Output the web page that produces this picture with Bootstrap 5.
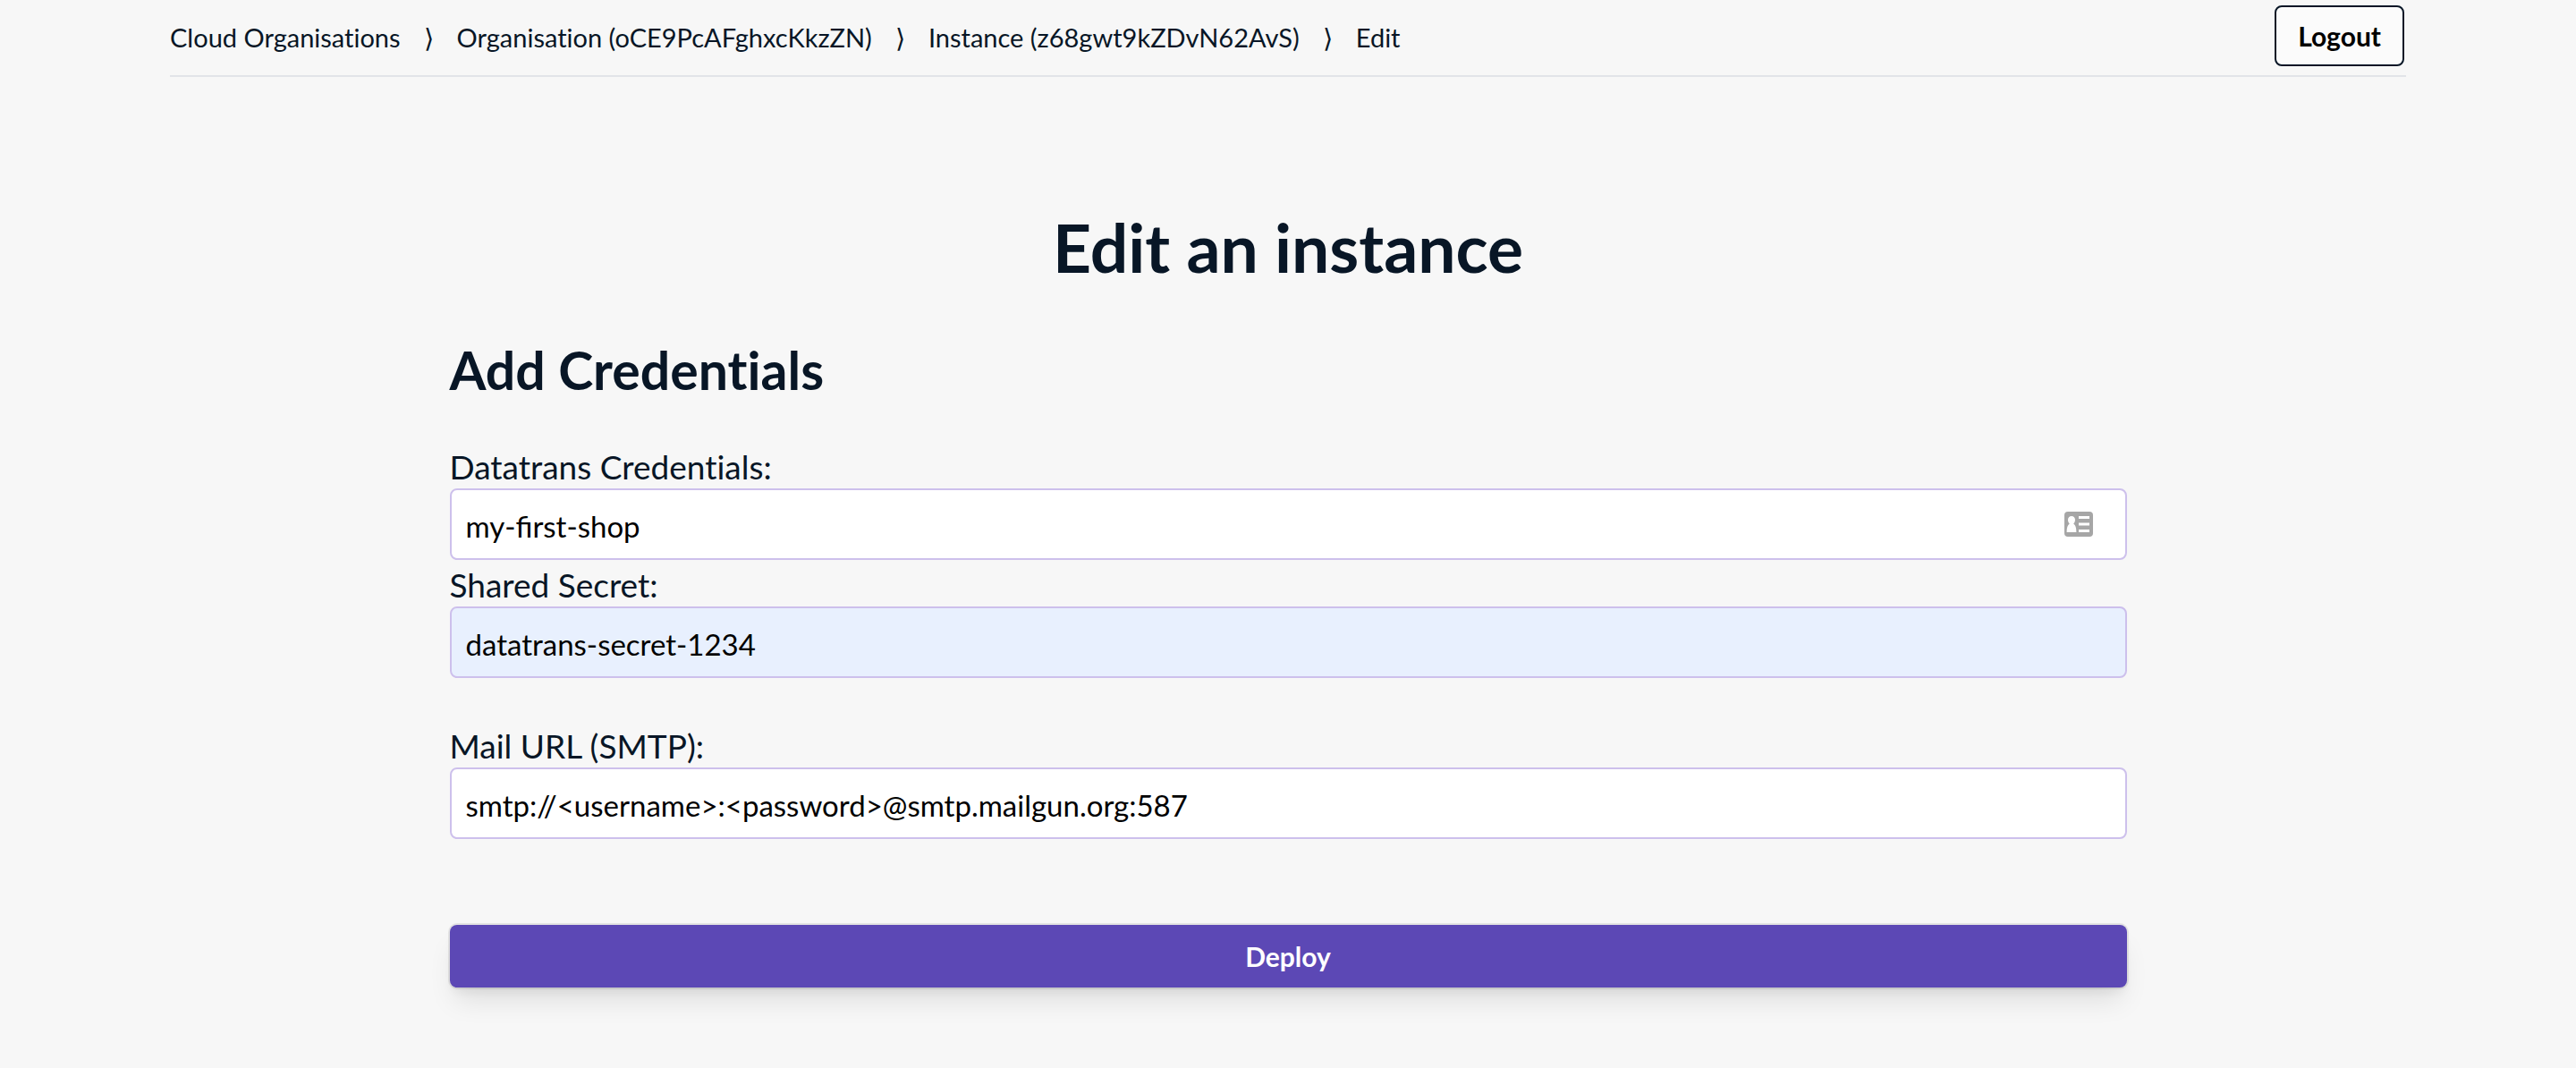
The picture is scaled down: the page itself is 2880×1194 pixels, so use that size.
<!DOCTYPE html>
<html lang="en">
<head>
<meta charset="utf-8">
<meta name="viewport" content="width=device-width, initial-scale=1">
<title>Edit an instance</title>
<link href="https://cdn.jsdelivr.net/npm/bootstrap@5.3.0/dist/css/bootstrap.min.css" rel="stylesheet">
<style>
  body { background: #f7f7f7; color: #081626; font-family: Avenir, Lato, sans-serif; font-size: 29px; font-variant-ligatures: none; }
  .page-wrap { max-width: 2500px; }
  .top-bar { border-bottom: 2px solid #e2e4e8; padding: 6px 0 10px; }
  .crumbs { --bs-breadcrumb-divider: "\27E9"; --bs-breadcrumb-item-padding-x: 26px; --bs-breadcrumb-divider-color: #081626; --bs-breadcrumb-font-size: 29px; line-height: 40px; padding-top: 4px; }
  .crumbs a, .crumbs .active { color: #081626; text-decoration: none; }
  .btn-logout { --bs-btn-color: #000; --bs-btn-bg: #fbfbfb; --bs-btn-border-color: #081626; --bs-btn-border-width: 2px; --bs-btn-border-radius: 8px; --bs-btn-hover-bg: #eee; --bs-btn-font-size: 30px; --bs-btn-font-weight: 700; --bs-btn-padding-x: 24px; --bs-btn-padding-y: 12px; --bs-btn-line-height: 40px; margin-right: 2px; }
  .page-title { font-size: 75px; line-height: 80px; font-weight: 700; margin: 150px 0 66px; }
  .section-title { font-size: 59px; line-height: 64px; font-weight: 700; margin-bottom: 52px; }
  .field-label { display: block; font-size: 37px; line-height: 48px; }
  .field-box { height: 80px; border: 2px solid #cdc0ec; border-radius: 8px; padding: 8px 16px 4px; font-size: 33px; color: #000; }
  .field-box.is-filled { background: #e8f0fe; }
  .contact-icon { position: absolute; right: 38px; top: 26px; width: 32px; height: 28px; }
  .field-stack { display: grid; gap: 4px; margin-bottom: 52px; }
  .btn-deploy { --bs-btn-color: #fff; --bs-btn-bg: #5c48b5; --bs-btn-hover-color: #fff; --bs-btn-hover-bg: #4f3da1; --bs-btn-border-width: 0; --bs-btn-border-radius: 8px; --bs-btn-font-size: 30px; --bs-btn-font-weight: 700; --bs-btn-line-height: 40px; --bs-btn-padding-y: 15px; margin: 44px 0 88px; box-shadow: 0 0 0 2px rgba(0,0,0,.08), 0 20px 30px -6px rgba(0,0,0,.1), 0 8px 12px -4px rgba(0,0,0,.06); }
</style>
<script src="https://cdn.jsdelivr.net/npm/bootstrap@5.3.0/dist/js/bootstrap.bundle.min.js"></script>
</head>
<body>
<div class="container-fluid page-wrap px-0">
  <header class="top-bar d-flex justify-content-between align-items-center">
    <nav aria-label="Breadcrumb">
      <ol class="breadcrumb crumbs mb-0">
        <li class="breadcrumb-item"><a href="#">Cloud Organisations</a></li>
        <li class="breadcrumb-item"><a href="#">Organisation (oCE9PcAFghxcKkzZN)</a></li>
        <li class="breadcrumb-item"><a href="#">Instance (z68gwt9kZDvN62AvS)</a></li>
        <li class="breadcrumb-item active" aria-current="page">Edit</li>
      </ol>
    </nav>
    <button type="button" class="btn btn-logout">Logout</button>
  </header>
  <main>
    <h1 class="page-title text-center">Edit an instance</h1>
    <div class="row justify-content-center gx-0">
      <form class="col-9">
        <h2 class="section-title">Add Credentials</h2>
        <div class="field-stack">
          <div>
            <label class="field-label" for="credentials">Datatrans Credentials:</label>
            <div class="position-relative">
              <input class="form-control field-box" type="text" id="credentials" value="my-first-shop">
              <svg class="contact-icon" viewBox="0 0 32 28" aria-hidden="true">
                <rect width="32" height="28" rx="4" fill="#a6a6a6"/>
                <path fill="#fff" d="M8 5c-2.500 0-4 1.800-4 4.200 0 2 .8 3.300 1.800 4.200C3.500 15 2.600 18 2.600 23h10.800c0-5-.9-8-3.200-9.600 1-.9 1.800-2.200 1.800-4.200C12 6.800 10.500 5 8 5zM16 5h12v3H16zM16 12.500h12v3H16zM16 20h12v3H16z"/>
              </svg>
            </div>
          </div>
          <div>
            <label class="field-label" for="secret">Shared Secret:</label>
            <input class="form-control field-box is-filled" type="text" id="secret" value="datatrans-secret-1234">
          </div>
        </div>
        <div class="field-stack">
          <div>
            <label class="field-label" for="mail">Mail URL (SMTP):</label>
            <input class="form-control field-box" type="text" id="mail" value="smtp://&lt;username&gt;:&lt;password&gt;@smtp.mailgun.org:587">
          </div>
        </div>
        <button type="submit" class="btn btn-deploy w-100">Deploy</button>
      </form>
    </div>
  </main>
</div>
</body>
</html>
